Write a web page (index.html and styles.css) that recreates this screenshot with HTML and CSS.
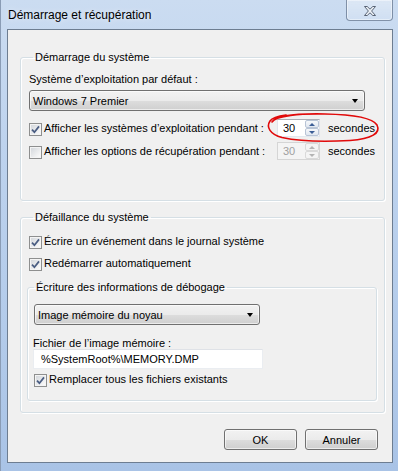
FILE: index.html
```html
<!DOCTYPE html>
<html lang="fr">
<head>
  <meta charset="UTF-8">
  <title>Démarrage et récupération</title>
  <link rel="stylesheet" href="styles.css">
</head>
<body>

  <div class="window">
    <div class="titlebar">
      <span class="title">Démarrage et récupération</span>
      <span class="close">
        <svg width="12" height="10" viewBox="0 0 12 10"><polygon points="0.5,0.5 3.2,0.5 6,3.2 8.8,0.5 11.5,0.5 7.6,5 11.5,9.5 8.8,9.5 6,6.8 3.2,9.5 0.5,9.5 4.4,5" fill="#eef2f7" stroke="#4a5568" stroke-width="0.9" stroke-linejoin="round"/></svg>
      </span>
    </div>

    <div class="client">
      <fieldset class="group group-boot">
        <legend>Démarrage du système</legend>
        <div class="label">Système d’exploitation par défaut :</div>
        <div class="combo combo-os"><span>Windows 7 Premier</span><span class="arrow"></span></div>

        <div class="row row-first">
          <label class="check check-wide"><span class="box"><svg width="11" height="11" viewBox="0 0 11 11"><path d="M2 5.6 L4.4 8.2 L9 2.4" fill="none" stroke="#4a5d82" stroke-width="1.7"/></svg></span>Afficher les systèmes d’exploitation pendant :</label>
          <div class="spin">
            <span class="spin-val">30</span>
            <span class="spin-btns"><span class="spin-btn"><span class="tri-up"></span></span><span class="spin-btn"><span class="tri-down"></span></span></span>
          </div>
          <span class="unit">secondes</span>
        </div>

        <div class="row row-next">
          <label class="check check-wide"><span class="box"></span>Afficher les options de récupération pendant :</label>
          <div class="spin disabled">
            <span class="spin-val">30</span>
            <span class="spin-btns"><span class="spin-btn"><span class="tri-up"></span></span><span class="spin-btn"><span class="tri-down"></span></span></span>
          </div>
          <span class="unit">secondes</span>
        </div>
      </fieldset>

      <fieldset class="group group-fail">
        <legend>Défaillance du système</legend>
        <label class="check check-line"><span class="box"><svg width="11" height="11" viewBox="0 0 11 11"><path d="M2 5.6 L4.4 8.2 L9 2.4" fill="none" stroke="#4a5d82" stroke-width="1.7"/></svg></span>Écrire un événement dans le journal système</label>
        <label class="check check-line check-gap"><span class="box"><svg width="11" height="11" viewBox="0 0 11 11"><path d="M2 5.6 L4.4 8.2 L9 2.4" fill="none" stroke="#4a5d82" stroke-width="1.7"/></svg></span>Redémarrer automatiquement</label>

        <fieldset class="group group-debug">
          <legend>Écriture des informations de débogage</legend>
          <div class="combo combo-dump"><span>Image mémoire du noyau</span><span class="arrow"></span></div>
          <div class="label label-file">Fichier de l’image mémoire :</div>
          <div class="field">%SystemRoot%\MEMORY.DMP</div>
          <label class="check check-line check-replace"><span class="box"><svg width="11" height="11" viewBox="0 0 11 11"><path d="M2 5.6 L4.4 8.2 L9 2.4" fill="none" stroke="#4a5d82" stroke-width="1.7"/></svg></span>Remplacer tous les fichiers existants</label>
        </fieldset>
      </fieldset>

      <div class="actions">
        <button class="btn">OK</button>
        <button class="btn">Annuler</button>
      </div>
    </div>
  </div>

  <!-- hand-drawn red circle round the timeout -->
  <svg class="scribble" width="398" height="471" viewBox="0 0 398 471">
    <path d="M272 122 C276 115.5 300 113.5 325 114 C350 114.5 372 117 377 125 C381 133 372 139 350 140.5 C325 142 298 141 282 137.5 C270 134.5 266 127 270 121 C272 118 278 116 286 115"
          fill="none" stroke="#e10a0a" stroke-width="1.6" stroke-linecap="round"/>
  </svg>

</body>
</html>
```

FILE: styles.css
```css
body {
  margin: 0;
  width: 398px;
  height: 471px;
  overflow: hidden;
  position: relative;
  font-family: "Liberation Sans", Arial, sans-serif;
  font-size: 11px;
  color: #000;
  background: linear-gradient(to bottom, #cbdcf1 0%, #bed3ee 30%, #b3cbea 70%, #a9c3e6 100%);
}
.window {
  height: 471px;
  box-shadow: inset 1px 0 0 #8a9cb5;
}
.titlebar {
  height: 29px;
  display: flex;
  justify-content: space-between;
  align-items: flex-start;
}
.title {
  font-size: 12px;
  line-height: 15px;
  padding: 8px 0 0 8px;
  text-shadow: 0 0 6px rgba(255,255,255,0.7);
}
.close {
  width: 45px;
  height: 19px;
  margin-right: 5px;
  border: 1px solid rgba(55,75,105,0.55);
  border-top: none;
  border-radius: 0 0 4px 4px;
  background: linear-gradient(to bottom, rgba(255,255,255,0.35), rgba(255,255,255,0.12));
  box-shadow: inset 0 0 0 1px rgba(255,255,255,0.45);
  display: flex;
  align-items: center;
  justify-content: center;
  padding-top: 1px;
  box-sizing: content-box;
}
.close svg { display: block; }
.client {
  margin-left: 7px;
  width: 384px;
  height: 432px;
  border: 1px solid #6d7d91;
  background: #f0f0f0;
}

/* group boxes */
.group {
  box-sizing: border-box;
  margin: 0;
  border: 1px solid #d5dfe5;
  border-radius: 3px;
  box-shadow: inset 1px 1px 0 #fff, 1px 1px 0 #fff;
  min-width: 0;
}
.group legend {
  padding: 0 2px;
  margin-left: 4px;
  line-height: 14px;
}
.group-boot {
  width: 365px;
  margin: 20px 0 0 12px;
  padding: 8px 19px 40px 8px;
}
.group-fail {
  width: 365px;
  margin: 9px 0 0 12px;
  padding: 10px 0 11px 8px;
}
.group-debug {
  width: 350px;
  margin: 9px 0 0 -2px;
  padding: 10px 0 13px 6px;
}
.group-debug legend {
  margin-left: 0;
}

.label {
  line-height: 14px;
}
.label-file {
  line-height: 12px;
  margin: 12px 0 0 -1px;
}

/* drop-down lists and buttons share the Aero gradient */
.combo,
.btn {
  box-sizing: border-box;
  border: 1px solid #707070;
  border-radius: 3px;
  background: linear-gradient(to bottom, #f2f2f2 0%, #ebebeb 50%, #dddddd 51%, #cfcfcf 100%);
  box-shadow: inset 0 0 0 1px rgba(255,255,255,0.6);
}
.combo {
  height: 21px;
  display: flex;
  align-items: center;
  justify-content: space-between;
  padding: 0 6px 0 3px;
}
.combo-os {
  width: 336px;
  margin-top: 4px;
}
.combo-dump {
  width: 226px;
}
.arrow {
  width: 0;
  height: 0;
  border-left: 3.5px solid transparent;
  border-right: 3.5px solid transparent;
  border-top: 4px solid #000;
}

/* check boxes */
.check {
  display: flex;
  align-items: flex-start;
  line-height: 14px;
}
.box {
  box-sizing: border-box;
  width: 13px;
  height: 13px;
  margin: 2px 2px 0 0;
  border: 1px solid #8e8f8f;
  background: linear-gradient(135deg, #d0d4d9 0%, #f8f8f8 85%);
  box-shadow: inset 0 0 0 1px #f4f4f4;
  flex-shrink: 0;
}
.box svg { display: block; }
.check-wide {
  flex: 0 0 248px;
}
.check-gap {
  margin-top: 7px;
}
.check-replace {
  margin-top: 3px;
}

.row {
  display: flex;
  align-items: center;
  height: 18px;
}
.row-first { margin-top: 8px; }
.row-next { margin-top: 5px; }

/* up-down field */
.spin {
  box-sizing: border-box;
  flex: 0 0 43px;
  height: 18px;
  display: flex;
  background: #fff;
  border: 1px solid #e2e3ea;
  border-top-color: #abadb3;
  border-bottom-color: #e3e9ef;
}
.spin-val {
  flex: 1;
  padding-left: 5px;
  line-height: 16px;
}
.spin-btns {
  flex: 0 0 14px;
  display: flex;
  flex-direction: column;
}
.spin-btn {
  flex: 1;
  box-sizing: border-box;
  border: 1px solid #b8c4d6;
  border-radius: 2px;
  background: linear-gradient(to bottom, #f6f8fb, #e1e7f0);
  display: flex;
  align-items: center;
  justify-content: center;
}
.tri-up,
.tri-down {
  width: 0;
  height: 0;
  border-left: 3px solid transparent;
  border-right: 3px solid transparent;
}
.tri-up { border-bottom: 3px solid #3b5d96; }
.tri-down { border-top: 3px solid #3b5d96; }
.spin.disabled {
  background: #f4f4f4;
  border-color: #d5d5d5;
  color: #a0a0a0;
}
.spin.disabled .spin-btn {
  border-color: #d9d9d9;
  background: #f4f4f4;
}
.spin.disabled .tri-up { border-bottom-color: #b4b4b4; }
.spin.disabled .tri-down { border-top-color: #b4b4b4; }
.unit {
  flex-shrink: 0;
  margin-left: 8px;
  white-space: nowrap;
}

/* text field */
.field {
  box-sizing: border-box;
  width: 230px;
  height: 20px;
  margin-left: -1px;
  padding-left: 7px;
  line-height: 18px;
  background: #fff;
  border: 1px solid #eaedf1;
  border-top-color: #dfe2e7;
}

.actions {
  display: flex;
  justify-content: flex-end;
  gap: 8px;
  margin: 16px 14px 0 0;
}
.btn {
  width: 73px;
  height: 21px;
  padding: 0;
  font-family: "Liberation Sans", Arial, sans-serif;
  font-size: 11px;
  color: #000;
}

.scribble {
  position: absolute;
  left: 0;
  top: 0;
  pointer-events: none;
}
```
